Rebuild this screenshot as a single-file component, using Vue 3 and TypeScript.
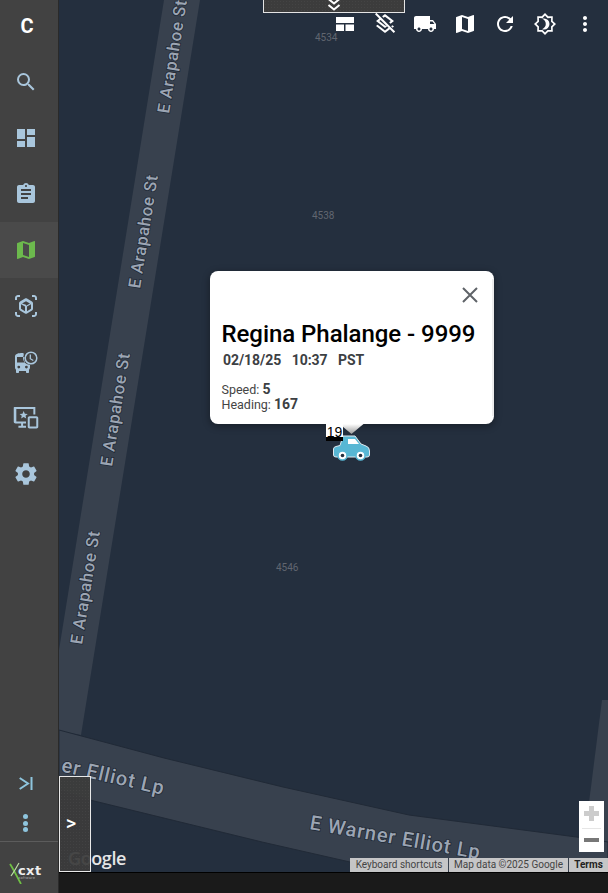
<script setup lang="ts">
interface NavItem { id: string; path: string; active?: boolean }
const nav: NavItem[] = [
  { id: 'search', path: 'M15.5 14h-.79l-.28-.27A6.47 6.47 0 0 0 16 9.5 6.5 6.5 0 1 0 9.5 16c1.61 0 3.09-.59 4.23-1.57l.27.28v.79l5 4.99L20.49 19l-4.99-5zm-6 0C7.01 14 5 11.99 5 9.5S7.01 5 9.5 5 14 7.01 14 9.5 11.99 14 9.5 14z' },
  { id: 'dash', path: 'M3 13h8V3H3v10zm0 8h8v-6H3v6zm10 0h8V11h-8v10zm0-18v6h8V3h-8z' },
  { id: 'assign', path: 'M19 3h-4.18C14.4 1.84 13.3 1 12 1s-2.4.84-2.82 2H5c-1.1 0-2 .9-2 2v14c0 1.1.9 2 2 2h14c1.1 0 2-.9 2-2V5c0-1.1-.9-2-2-2zm-7 0c.55 0 1 .45 1 1s-.45 1-1 1-1-.45-1-1 .45-1 1-1zm2 14H7v-2h7v2zm3-4H7v-2h10v2zm0-4H7V7h10v2z' },
  { id: 'map', active: true, path: 'M20.5 3l-.16.03L15 5.1 9 3 3.36 4.9c-.21.07-.36.25-.36.48V20.5c0 .28.22.5.5.5l.16-.03L9 18.9l6 2.1 5.64-1.9c.21-.07.36-.25.36-.48V3.5c0-.28-.22-.5-.5-.5zM15 19l-6-2.11V5l6 2.11V19z' },
  { id: 'cube', path: 'M3 4c0-.55.45-1 1-1h2V1H4C2.34 1 1 2.34 1 4v2h2V4zm0 16v-2H1v2c0 1.66 1.34 3 3 3h2v-2H4c-.55 0-1-.45-1-1zM20 1h-2v2h2c.55 0 1 .45 1 1v2h2V4c0-1.66-1.34-3-3-3zm1 19c0 .55-.45 1-1 1h-2v2h2c1.66 0 3-1.34 3-3v-2h-2v2zm-2-5.13V9.13c0-.72-.38-1.38-1-1.73l-5-2.88c-.31-.18-.65-.27-1-.27s-.69.09-1 .27L6 7.39c-.62.36-1 1.02-1 1.74v5.74c0 .72.38 1.38 1 1.73l5 2.88c.31.18.65.27 1 .27s.69-.09 1-.27l5-2.88c.62-.35 1-1.01 1-1.73zm-8 2.3l-4-2.3v-4.63l4 2.33v4.6zm1-6.33L8.01 9.53 12 7.23l3.99 2.3L12 11.84zm5 4.03l-4 2.3v-4.6l4-2.33v4.63z' },
]
</script>

<template>
  <div class="page">
    <aside class="sidebar">
      <div class="brand">C</div>
      <nav class="nav">
        <div v-for="n in nav" :key="n.id" class="nav-item" :class="{ active: n.active }">
          <svg viewBox="0 0 24 24" width="24" height="24"><path :d="n.path" /></svg>
        </div>
        <div class="nav-item">
          <svg viewBox="0 0 26 26" width="26" height="26">
            <path d="M9.500 4C5.500 4 2 4.700 2 7.500v11c0 .9.400 1.700 1 2.200V23c0 .6.400 1 1 1h1c.6 0 1-.4 1-1v-1h7v1c0 .6.400 1 1 1h1c.6 0 1-.4 1-1v-2.300c.6-.5 1-1.300 1-2.200v-2.600a6.800 6.800 0 0 1-6.300-9.700C11 4.100 10.300 4 9.500 4zM4 8h7.500a7 7 0 0 0 .5 5.500H4V8zm1.800 11.500a1.400 1.400 0 1 1 0-2.800 1.400 1.400 0 0 1 0 2.800zm7.600 0a1.400 1.400 0 1 1 0-2.800 1.400 1.400 0 0 1 0 2.800z" fill-rule="evenodd" />
            <circle cx="18" cy="9" r="5.800" class="clock-ring" />
            <path d="M17.300 5.500v4.200l3 1.800" class="clock-hand" />
          </svg>
        </div>
        <div class="nav-item">
          <svg viewBox="0 0 24 24" width="28" height="28">
            <path d="M2 2.500h18V9h-1.700V4.200H3.700V15H12v1.700H9.500v2H12v1.700H5.500v-1.700h2.300v-2H3c-.8 0-1.500-.7-1.500-1.500V3c0-.3.200-.5.500-.5z" />
            <path d="M10 6l1 2.300 2.500.2-1.900 1.600.6 2.400L10 11.200l-2.200 1.300.6-2.400-1.900-1.600 2.500-.2L10 6z" />
            <path d="M15 10.500h6c.8 0 1.500.7 1.500 1.500v7.500c0 .8-.7 1.500-1.500 1.500h-6c-.8 0-1.500-.7-1.500-1.500V12c0-.8.700-1.500 1.500-1.500zm.200 1.800v6.900h5.600v-6.900h-5.600z" fill-rule="evenodd" />
          </svg>
        </div>
        <div class="nav-item">
          <svg viewBox="0 0 24 24" width="26" height="26"><path d="M19.430 12.980c.04-.32.070-.64.070-.98s-.03-.66-.07-.98l2.110-1.650c.19-.15.240-.42.120-.64l-2-3.460c-.12-.22-.39-.30-.61-.22l-2.490 1c-.52-.40-1.080-.73-1.690-.98l-.38-2.650A.488.488 0 0 0 14 2h-4c-.25 0-.46.180-.49.420l-.38 2.650c-.61.250-1.170.59-1.690.98l-2.490-1c-.23-.09-.49 0-.61.220l-2 3.460c-.13.220-.07.490.12.640l2.110 1.650c-.04.320-.07.650-.07.980s.03.660.07.980l-2.110 1.650c-.19.150-.24.420-.12.640l2 3.460c.12.220.39.300.61.220l2.490-1c.52.400 1.080.730 1.690.980l.38 2.650c.03.240.24.420.49.420h4c.25 0 .46-.18.49-.42l.38-2.650c.61-.25 1.170-.59 1.690-.98l2.490 1c.23.090.49 0 .61-.22l2-3.460c.12-.22.070-.49-.12-.64l-2.110-1.650zM12 15.500c-1.930 0-3.500-1.570-3.500-3.500s1.570-3.500 3.500-3.500 3.500 1.570 3.500 3.500-1.570 3.500-3.500 3.500z" /></svg>
        </div>
      </nav>
      <div class="side-bottom">
        <div class="collapse-icon">
          <svg viewBox="0 0 14 13" width="14" height="13"><path d="M.7 1 9 6.500.7 12M12.500 0v13" fill="none" stroke-width="2" /></svg>
        </div>
        <div class="dots"><i></i><i></i><i></i></div>
        <div class="logo">
          <svg viewBox="0 0 40 32" width="40" height="32">
            <path d="M4 12c4 6 7 13 11 20" fill="none" stroke="#6fbf44" stroke-width="1.800" />
            <path d="M13 11C10 16 8 20 5 24" fill="none" stroke="#b9dca4" stroke-width="1.200" />
            <text x="12" y="22.500" class="logo-cxt">cxt</text>
            <text x="12.500" y="27" class="logo-sub">software</text>
          </svg>
        </div>
      </div>
    </aside>

    <main class="main">
      <div class="map">
        <svg class="map-art" viewBox="0 0 549 872" width="549" height="872">
          <rect width="549" height="872" fill="#242f3e" />
          <path d="M105 0h36L22 735 0 731V650z" fill="#38414e" />
          <path d="M543 700h6v150h-25z" fill="#38414e" />
          <path d="M0 730 105 758 224 787 350 815 525 838 549 842V872H338L291 862 203 842 31 800 0 790z" fill="#38414e" stroke="#212a37" stroke-width="1" />
          <g class="road-label">
            <text transform="translate(110 114) rotate(-81)">E Arapahoe St</text>
            <text transform="translate(81 289) rotate(-81)">E Arapahoe St</text>
            <text transform="translate(53 467) rotate(-81)">E Arapahoe St</text>
            <text transform="translate(23 645) rotate(-81)">E Arapahoe St</text>
          </g>
          <g class="road-label big">
            <text transform="translate(104 795) rotate(13)" text-anchor="end">er Elliot Lp</text>
            <text transform="translate(250 829) rotate(10)">E Warner Elliot Lp</text>
          </g>
          <g class="addr">
            <text x="256" y="41">4534</text>
            <text x="253" y="219">4538</text>
            <text x="217" y="571">4546</text>
          </g>
          <text x="9" y="865" class="google">Google</text>
        </svg>

        <div class="top-tab">
          <svg viewBox="0 0 14 13" width="14" height="13"><path d="M1.500 0 7 4.500 12.500 0M1.500 6 7 10.500 12.500 6" fill="none" stroke="#fff" stroke-width="2" /></svg>
        </div>

        <div class="toolbar">
          <svg viewBox="0 0 24 24" width="24" height="24"><path d="M3 5h18v6H3zM3 12.500h8V19H3zM12.500 12.500H21V19h-8.500z" /></svg>
          <svg viewBox="0 0 24 24" width="24" height="24"><path d="M12 4.640 17.740 9.100l-1.580 1.220 1.430 1.430L21 9.100l-9-7-2.910 2.270 1.420 1.420zM21 14.600l-1.640-1.260-.01-.01-1.190.93 1.430 1.430zM3.410.86 2 2.270l4.220 4.220L3 9l1.630 1.260L12 16l2.090-1.630 1.420 1.420-3.520 2.740-7.370-5.730L3 14.070l9 7 4.950-3.850L20.730 21l1.410-1.410L3.410.860zM12 13.470 6.260 9l1.400-1.070 5.990 6z" /></svg>
          <svg viewBox="0 0 24 24" width="24" height="24"><path d="M20 8h-3V4H3c-1.100 0-2 .9-2 2v11h2c0 1.660 1.340 3 3 3s3-1.340 3-3h6c0 1.660 1.340 3 3 3s3-1.340 3-3h2v-5l-3-4zM6 18.500c-.83 0-1.500-.67-1.500-1.500s.67-1.500 1.500-1.500 1.500.67 1.500 1.500-.67 1.500-1.500 1.500zm13.500-9 1.960 2.500H17V9.500h2.500zm-1.500 9c-.83 0-1.500-.67-1.500-1.500s.67-1.500 1.500-1.500 1.500.67 1.500 1.500-.67 1.500-1.500 1.500z" /></svg>
          <svg viewBox="0 0 24 24" width="24" height="24"><path d="M20.500 3l-.16.03L15 5.100 9 3 3.360 4.900c-.21.070-.36.250-.36.480V20.500c0 .28.220.5.5.5l.16-.03L9 18.900l6 2.100 5.640-1.900c.21-.07.360-.25.360-.48V3.500c0-.28-.22-.5-.5-.5zM15 19l-6-2.110V5l6 2.110V19z" /></svg>
          <svg viewBox="0 0 24 24" width="24" height="24"><path d="M17.650 6.350A7.958 7.958 0 0 0 12 4c-4.420 0-7.990 3.580-7.990 8s3.570 8 7.990 8c3.730 0 6.840-2.550 7.730-6h-2.080A5.990 5.990 0 0 1 12 18c-3.310 0-6-2.690-6-6s2.690-6 6-6c1.660 0 3.140.69 4.220 1.780L13 11h7V4l-2.350 2.350z" /></svg>
          <svg viewBox="0 0 24 24" width="24" height="24"><path d="M12 1l3.200 3.300 4.600 0-.1 4.600L23 12l-3.300 3.200.1 4.600-4.600-.1L12 23l-3.200-3.300-4.600.1.100-4.600L1 12l3.300-3.100-.1-4.600 4.600 0L12 1zm0 2.600L9.500 6.200l-3.600-.1.100 3.600L3.500 12 6 14.400l-.1 3.600 3.600-.1 2.500 2.500 2.500-2.500 3.600.1-.1-3.600 2.500-2.400L18 9.700l.1-3.600-3.600.1L12 3.600z" fill-rule="evenodd" /><path d="M11 6.500a5.500 5.500 0 0 1 0 11c-.7 0-1.300-.1-1.900-.3 2.200-.9 3.700-2.900 3.700-5.200s-1.500-4.300-3.700-5.200c.6-.2 1.200-.3 1.900-.3z" /></svg>
          <svg viewBox="0 0 24 24" width="24" height="24"><path d="M12 8c1.100 0 2-.9 2-2s-.9-2-2-2-2 .9-2 2 .9 2 2 2zm0 2c-1.100 0-2 .9-2 2s.9 2 2 2 2-.9 2-2-.9-2-2-2zm0 6c-1.100 0-2 .9-2 2s.9 2 2 2 2-.9 2-2-.9-2-2-2z" /></svg>
        </div>

        <div class="popup">
          <button class="close" aria-label="Close">
            <svg viewBox="0 0 16 16" width="16" height="16"><path d="M1 1l14 14M15 1 1 15" stroke="#5f6368" stroke-width="2" fill="none" /></svg>
          </button>
          <h2 class="title">Regina Phalange - 9999</h2>
          <div class="when"><span>02/18/25</span><span>10:37</span><span>PST</span></div>
          <div class="stats">
            <div>Speed: <b>5</b></div>
            <div>Heading: <b>167</b></div>
          </div>
          <i class="tail"></i>
        </div>

        <div class="marker">
          <svg viewBox="0 0 37 26" width="37" height="26">
            <path d="M10 1H22L28 9 33 11Q36.500 12 36.500 16V20Q36.500 22 34 22H3Q.5 22 .5 20V14Q.5 12 3 11.500L7 10.500Z" fill="#58b7d4" stroke="#dfe8ee" stroke-width="1" />
            <path d="M15 4h7l4 5H15z" fill="#fff" />
            <circle cx="9.500" cy="20.500" r="4.500" fill="#fff" stroke="#58b7d4" stroke-width="1.500" />
            <circle cx="9.500" cy="20.500" r="1.800" fill="#242f3e" />
            <circle cx="27.500" cy="20.500" r="4.500" fill="#fff" stroke="#58b7d4" stroke-width="1.500" />
            <circle cx="27.500" cy="20.500" r="1.800" fill="#242f3e" />
          </svg>
          <span class="marker-num">19</span>
        </div>

        <button class="expand">&gt;</button>

        <div class="zoom-ctl">
          <span class="plus"></span>
          <i></i>
          <span class="minus"></span>
        </div>

        <div class="attrib">
          <span class="kb">Keyboard shortcuts</span>
          <span class="data">Map data ©2025 Google</span>
          <span class="terms">Terms</span>
        </div>
      </div>
      <div class="footer-bar"></div>
    </main>
  </div>
</template>

<style>
html, body { margin: 0; padding: 0; background: #1a1a1a; }
</style>

<style scoped>
.page { width: 608px; height: 893px; display: flex; overflow: hidden; font-family: Roboto, "Liberation Sans", sans-serif; }
.sidebar { width: 59px; box-sizing: border-box; flex: none; background: #424242; border-right: 1px solid #2a2a2a; display: flex; flex-direction: column; align-items: stretch; }
.brand { height: 54px; box-sizing: border-box; padding: 0 4px 2px 0; display: flex; align-items: center; justify-content: center; color: #fff; font-weight: 700; font-size: 20px; }
.nav { display: flex; flex-direction: column; }
.nav-item { height: 56px; box-sizing: border-box; padding-right: 6px; display: flex; align-items: center; justify-content: center; fill: #a9c6dc; }
.nav-item.active { background: #4a4a4a; fill: #6cb94d; }
.clock-ring { fill: #424242; stroke: #a9c6dc; stroke-width: 1.500px; }
.clock-hand { fill: none; stroke: #a9c6dc; stroke-width: 1.300px; }
.side-bottom { margin-top: auto; display: flex; flex-direction: column; align-items: stretch; }
.collapse-icon { height: 28px; margin-bottom: 8px; padding-right: 6px; display: flex; align-items: center; justify-content: center; stroke: #8ec5de; }
.dots { height: 36px; padding-right: 8px; display: flex; flex-direction: column; align-items: center; justify-content: center; gap: 1.500px; }
.dots i { width: 5px; height: 5px; border-radius: 50%; background: #8ec5de; }
.logo { height: 52px; box-sizing: border-box; padding-right: 6px; border-top: 1px solid #5c5c5c; display: flex; align-items: center; justify-content: center; }
.logo-cxt { font: 700 13px "DejaVu Sans", sans-serif; letter-spacing: .4px; fill: #eee; }
.logo-sub { font: 3.500px "Liberation Sans", sans-serif; letter-spacing: .45px; fill: #bbb; }
.main { flex: 1; display: flex; flex-direction: column; min-width: 0; }
.map { position: relative; height: 872px; overflow: hidden; background: #242f3e; }
.map-art { display: block; }
.road-label text { font: 500 17px Roboto, sans-serif; letter-spacing: .6px; fill: #9ca5b3; stroke: #1f2835; stroke-width: 1.500px; paint-order: stroke; }
.road-label.big text { font-size: 20px; letter-spacing: .9px; }
.addr text { font: 10px Roboto, sans-serif; fill: #616670; }
.google { font: 600 18px "Open Sans", sans-serif; letter-spacing: -.4px; fill: #e6e6e6; }
.top-tab { position: absolute; left: 204px; top: -1px; width: 142px; height: 14px; box-sizing: border-box; background: #3c3c3c radial-gradient(#444 35%, transparent 40%) 0 0/3px 3px; border: 1px solid #e4e4e4; display: flex; justify-content: center; align-items: flex-end; }
.toolbar { position: absolute; left: 274px; top: 12px; display: flex; gap: 16px; fill: #fff; }
.popup { position: absolute; left: 150.500px; top: 271px; width: 284px; height: 153px; box-sizing: border-box; padding: 51px 12px 0 12px; background: #fff; border-radius: 8px; box-shadow: 0 2px 7px 1px rgba(0,0,0,.3); color: #000; }
.popup::after { content: ""; position: absolute; right: 0; top: 8px; bottom: 8px; width: 2px; background: #ececec; }
.close { position: absolute; right: 16px; top: 16px; width: 16px; height: 16px; padding: 0; border: 0; background: none; display: block; }
.close svg { display: block; }
.title { margin: 0; font: 500 24px/24px Roboto, sans-serif; letter-spacing: -.05px; white-space: nowrap; }
.when { margin: 5px 0 0 1.500px; display: flex; gap: 10.500px; font: 700 14px/18px Roboto, sans-serif; letter-spacing: -.05px; color: #3c4043; }
.stats { margin-top: 13px; font: 400 12.500px/15px Roboto, sans-serif; color: #444; }
.stats b { font-size: 14px; font-weight: 700; color: #3c4043; }
.tail { position: absolute; left: 130px; top: 153px; width: 24px; height: 10px; background: linear-gradient(#fff, #9a9a9a); clip-path: polygon(0 0, 100% 0, 50% 100%); }
.marker { position: absolute; left: 274px; top: 424px; width: 37px; height: 37px; }
.marker svg { position: absolute; left: 0; top: 11px; }
.marker-num { position: absolute; left: -7px; top: 0; display: block; width: 17px; height: 13px; border-bottom: 4px solid #000; background: #fff; color: #000; font: 14px/16px "Liberation Sans", sans-serif; text-align: center; }
.expand { position: absolute; left: 0; top: 776px; width: 32px; height: 96px; box-sizing: border-box; padding: 0 8px 2px 0; border: 1px solid #e8e8e8; background: rgba(60,60,60,.94) radial-gradient(rgba(72,72,72,.6) 35%, transparent 40%) 0 0/3px 3px; color: #fff; font: 500 20px Roboto, sans-serif; }
.zoom-ctl { position: absolute; left: 520px; top: 801px; width: 25px; height: 51px; background: #fff; display: flex; flex-direction: column; align-items: center; }
.zoom-ctl i { width: 19px; height: 1px; background: #e6e6e6; margin-top: 7px; }
.zoom-ctl .plus { display: block; width: 15px; height: 15px; margin-top: 5px; background: linear-gradient(#ccc,#ccc) center/15px 5px no-repeat, linear-gradient(#ccc,#ccc) center/5px 15px no-repeat; }
.zoom-ctl .minus { display: block; width: 15px; height: 4px; margin-top: 9px; background: #777; }
.attrib { position: absolute; right: 0; bottom: 0; height: 14px; display: flex; gap: 1px; font: 10px/14px Roboto, sans-serif; color: #444; }
.attrib span { background: rgba(205,205,205,.95); white-space: nowrap; text-align: center; box-sizing: border-box; }
.attrib .kb { width: 98px; }
.attrib .data { width: 119px; }
.attrib .terms { width: 39px; font-weight: 700; color: #222; }
.footer-bar { flex: 1; background: #1a1a1a; border-top: 1px solid #000; }
</style>
